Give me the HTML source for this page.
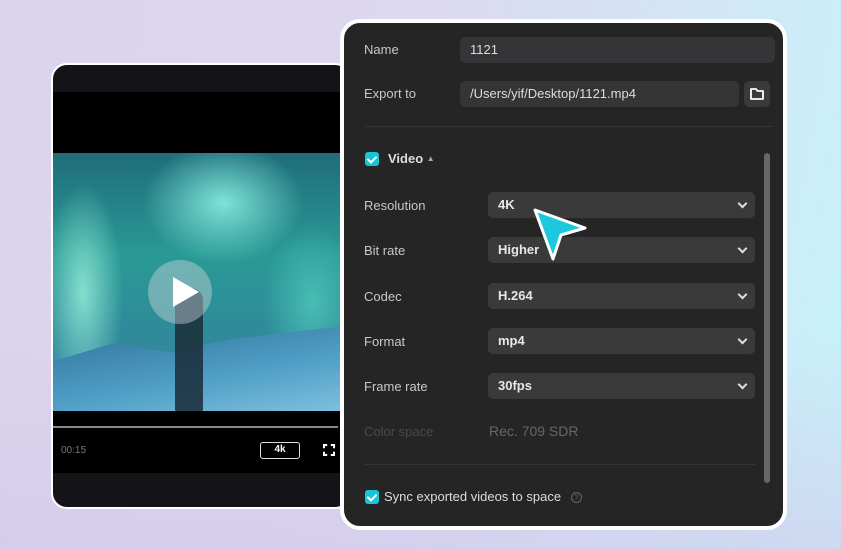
<!DOCTYPE html>
<html><head><style>
*{margin:0;padding:0;box-sizing:border-box}
body{width:841px;height:549px;overflow:hidden;position:relative;font-family:"Liberation Sans",sans-serif;
background:linear-gradient(100deg,#dcd3ec 0%,#dcd8ef 45%,#d3e6f6 75%,#c6f3fa 100%);}
.bg2{position:absolute;inset:0;background:linear-gradient(180deg,rgba(0,0,0,0) 60%,rgba(210,200,235,.6) 100%)}
.left{position:absolute;left:51px;top:63px;width:300px;height:446px;border:2px solid #fff;border-radius:16px;background:#141418;overflow:hidden}
.blk{position:absolute;left:0;right:0;background:#000}
.img{position:absolute;left:0;right:0;top:88px;height:258px;overflow:hidden;
background:radial-gradient(ellipse 40px 110px at 30px 140px,rgba(170,255,230,.7),transparent),
radial-gradient(ellipse 80px 60px at 170px 50px,rgba(150,250,235,.8),transparent),
radial-gradient(ellipse 50px 80px at 260px 150px,rgba(90,220,200,.6),transparent),
linear-gradient(180deg,#1f6d7a 0%,#2a9a96 40%,#2f8a99 70%,#3f8cb0 100%)}
.snow{position:absolute;left:0;right:0;bottom:0;height:90px;background:linear-gradient(170deg,#2f6f98,#4f9fc6 60%,#7fc0de);clip-path:polygon(0 45%,20% 25%,40% 35%,60% 20%,100% 5%,100% 100%,0 100%)}
.man{position:absolute;left:122px;top:135px;width:28px;height:125px;background:#1a2c38;border-radius:12px 12px 4px 4px;opacity:.85}
.play{position:absolute;left:95px;top:107px;width:64px;height:64px;border-radius:50%;background:rgba(200,210,215,.45)}
.play:after{content:"";position:absolute;left:25px;top:17px;border-left:26px solid #fff;border-top:15px solid transparent;border-bottom:15px solid transparent}
.panel{position:absolute;left:340px;top:19px;width:447px;height:511px;border:4px solid #fff;border-radius:20px;background:#252525;overflow:hidden}
.in{position:absolute;left:0;top:-4px;width:100%;height:100%}
.lbl{position:absolute;left:20px;color:#c8c8c8;font-size:13px}
.inp{position:absolute;background:#353538;border-radius:5px;color:#ddd;font-size:13px;padding-left:10px;line-height:26px}
.sel{position:absolute;left:144px;width:267px;height:26px;background:#3a3a3a;border-radius:5px;color:#e8e8e8;font-size:13px;font-weight:bold;padding-left:10px;line-height:26px}
.sel:after{content:"";position:absolute;right:9px;top:8px;width:5px;height:5px;border-right:2px solid #ddd;border-bottom:2px solid #ddd;transform:rotate(45deg)}
.cb{position:absolute;width:14px;height:14px;background:#18c4d6;border-radius:3px}
.cb:after{content:"";position:absolute;left:4px;top:2px;width:4px;height:7px;border-right:2px solid #fff;border-bottom:2px solid #fff;transform:rotate(45deg)}
</style></head><body><div class="bg2"></div>
<div class="left">
<div class="blk" style="top:27px;height:61px"></div>
<div class="img"><div class="snow"></div><div class="man"></div><div class="play"></div></div>
<div class="blk" style="top:346px;height:62px"></div>
<div style="position:absolute;left:0;width:285px;top:361px;height:2px;background:#8a8a8a"></div>
<div style="position:absolute;left:8px;top:380px;color:#777;font-size:10px">00:15</div>
<div style="position:absolute;left:207px;top:377px;width:40px;height:17px;border:1.5px solid #ddd;border-radius:3px;color:#fff;font-size:10px;font-weight:bold;text-align:center;line-height:14px">4k</div>
<div style="position:absolute;left:270px;top:379px;width:12px;height:12px;border:2px solid #fff;clip-path:polygon(0 0,35% 0,35% 100%,65% 100%,65% 0,100% 0,100% 35%,0 35%,0 65%,100% 65%,100% 100%,0 100%)"></div>
</div>
<div class="panel"><div class="in">
<div class="lbl" style="top:23px">Name</div>
<div class="inp" style="left:116px;top:18px;width:315px;height:26px">1121</div>
<div class="lbl" style="top:67px">Export to</div>
<div class="inp" style="left:116px;top:62px;width:279px;height:26px">/Users/yif/Desktop/1121.mp4</div>
<div style="position:absolute;left:400px;top:62px;width:26px;height:26px;background:#3a3a3a;border-radius:5px">
<svg width="26" height="26" viewBox="0 0 26 26"><path d="M7 8h5l1.5 2H19v8H7z" fill="none" stroke="#fff" stroke-width="1.8" stroke-linejoin="round"/></svg></div>
<div style="position:absolute;left:20px;right:10px;top:107px;height:1px;background:#333"></div>
<div class="cb" style="left:21px;top:133px"></div>
<div style="position:absolute;left:44px;top:132px;color:#ddd;font-size:13px;font-weight:bold">Video <span style="font-size:8px;color:#aaa;vertical-align:2px">▲</span></div>
<div style="position:absolute;left:420px;top:134px;width:6px;height:330px;background:#666;border-radius:3px"></div>
<div class="lbl" style="top:179px">Resolution</div><div class="sel" style="top:173px">4K</div>
<div class="lbl" style="top:224px">Bit rate</div><div class="sel" style="top:218px">Higher</div>
<div class="lbl" style="top:270px">Codec</div><div class="sel" style="top:264px">H.264</div>
<div class="lbl" style="top:315px">Format</div><div class="sel" style="top:309px">mp4</div>
<div class="lbl" style="top:360px">Frame rate</div><div class="sel" style="top:354px">30fps</div>
<div class="lbl" style="top:405px;color:#4a4a4a">Color space</div>
<div style="position:absolute;left:145px;top:404px;color:#666;font-size:14px">Rec. 709 SDR</div>
<div style="position:absolute;left:20px;width:392px;top:445px;height:1px;background:#333"></div>
<div class="cb" style="left:21px;top:471px"></div>
<div style="position:absolute;left:40px;top:470px;color:#ddd;font-size:13px">Sync exported videos to space <span style="display:inline-block;width:11px;height:11px;border:1px solid #666;border-radius:50%;color:#666;font-size:8px;text-align:center;line-height:10px;margin-left:6px;vertical-align:1px">?</span></div>
<svg style="position:absolute;left:186px;top:186px" width="60" height="60" viewBox="0 0 60 60"><path d="M5 5L55 23L31 30L23 54Z" fill="#1cc8dc" stroke="#fff" stroke-width="3" stroke-linejoin="round"/></svg>
</div></div>
</body></html>
